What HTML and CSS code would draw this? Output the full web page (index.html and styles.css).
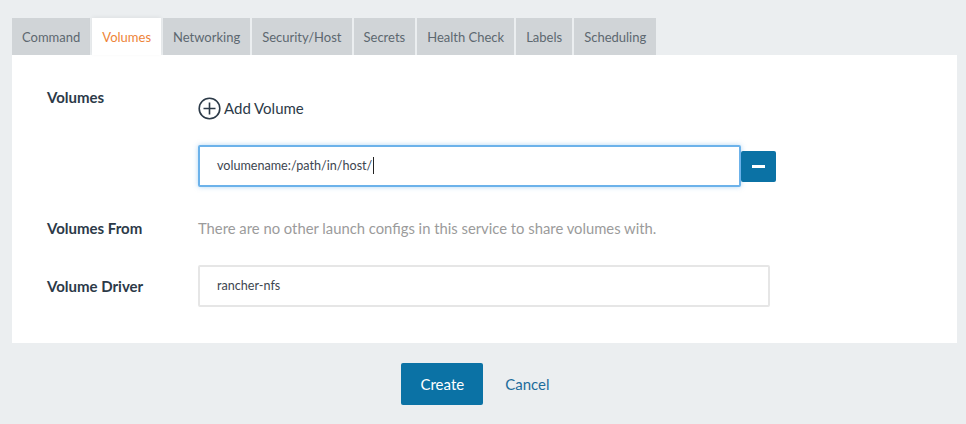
FILE: index.html
```html
<!DOCTYPE html>
<html>
<head>
<meta charset="utf-8">
<link rel="stylesheet" href="styles.css">
</head>
<body>
<div class="page">
  <ul class="tabs">
    <li class="tab">Command</li>
    <li class="tab active">Volumes</li>
    <li class="tab">Networking</li>
    <li class="tab">Security/Host</li>
    <li class="tab">Secrets</li>
    <li class="tab">Health Check</li>
    <li class="tab">Labels</li>
    <li class="tab">Scheduling</li>
  </ul>
  <div class="panel">
    <div class="row row-volumes">
      <div class="label">Volumes</div>
      <div class="control">
        <div class="add-volume">
          <svg class="plus-icon" width="23" height="23" viewBox="0 0 23 23">
            <circle cx="11.5" cy="11.5" r="10.3" fill="none" stroke="#2c3a48" stroke-width="1.6"/>
            <path d="M11.5 5.5V17.5M5.5 11.5H17.5" stroke="#2c3a48" stroke-width="1.6"/>
          </svg>
          <span>Add Volume</span>
        </div>
        <div class="input-group">
          <div class="input focused">volumename:/path/in/host/<span class="caret"></span></div>
          <button class="btn-remove"><span class="minus"></span></button>
        </div>
      </div>
    </div>
    <div class="row row-from">
      <div class="label">Volumes From</div>
      <div class="control muted">There are no other launch configs in this service to share volumes with.</div>
    </div>
    <div class="row row-driver">
      <div class="label">Volume Driver</div>
      <div class="control">
        <div class="input driver">rancher-nfs</div>
      </div>
    </div>
  </div>
  <div class="footer">
    <button class="btn-primary">Create</button>
    <button class="btn-link">Cancel</button>
  </div>
</div>
</body>
</html>
```

FILE: styles.css
```css
html, body {
  margin: 0;
  padding: 0;
  background: #ebeef0;
  font-family: Lato, "Open Sans", "Liberation Sans", sans-serif;
}
.page {
  padding: 18px 9px 0 12px;
}
.tabs {
  list-style: none;
  margin: 0;
  padding: 0;
  display: flex;
  gap: 2px;
}
.tab {
  height: 37px;
  line-height: 38px;
  padding: 0 10px;
  background: #d0d4d7;
  color: #5d6870;
  font-size: 13px;
}
.tab.active {
  background: #ffffff;
  color: #ee8438;
  box-shadow: 0 -1px 4px rgba(0, 0, 0, 0.06);
}
.panel {
  background: #ffffff;
  padding: 30px 35px 36px 35px;
}
.row {
  display: grid;
  grid-template-columns: 151px 1fr;
}
.label {
  font-weight: 700;
  font-size: 15px;
  color: #2c3a48;
  line-height: 24px;
}
.add-volume {
  margin-top: 11px;
  display: flex;
  align-items: center;
  gap: 3px;
  height: 24px;
  font-size: 15px;
  color: #2c3a48;
}
.plus-icon {
  display: block;
}
.input-group {
  margin-top: 25px;
  display: flex;
  align-items: center;
}
.input {
  box-sizing: border-box;
  height: 42px;
  line-height: 38px;
  padding: 0 17px;
  border: 2px solid #e6e6e6;
  border-radius: 2px;
  font-size: 12.6px;
  color: #3d4650;
  background: #fff;
}
.input.focused {
  width: 543px;
  border-color: #6cb2ea;
  box-shadow: 0 0 5px rgba(102, 175, 233, 0.5);
}
.caret {
  display: inline-block;
  width: 1px;
  height: 17px;
  background: #222;
  vertical-align: -4px;
  margin-left: 1px;
}
.btn-remove {
  width: 35px;
  height: 31px;
  border: none;
  border-radius: 2px;
  background: #0b72a5;
  display: flex;
  align-items: center;
  justify-content: center;
  padding: 0;
}
.minus {
  display: block;
  width: 13px;
  height: 3px;
  background: #ffffff;
}
.row-from {
  margin-top: 30px;
  align-items: center;
}
.row-from .label,
.muted {
  line-height: 22px;
}
.muted {
  color: #9b9b9b;
  font-size: 14.8px;
}
.row-driver {
  margin-top: 26px;
  align-items: center;
}
.input.driver {
  width: 572px;
}
.footer {
  display: flex;
  justify-content: center;
  align-items: center;
  margin-top: 20px;
  padding-right: 6px;
}
.btn-primary {
  height: 42px;
  padding: 0 19px;
  border: none;
  border-radius: 2px;
  background: #0b72a5;
  color: #ffffff;
  font-family: inherit;
  font-size: 15px;
}
.btn-link {
  margin-left: 10px;
  height: 42px;
  padding: 0 12px;
  border: none;
  background: transparent;
  color: #1d6c9b;
  font-family: inherit;
  font-size: 15px;
}
```
